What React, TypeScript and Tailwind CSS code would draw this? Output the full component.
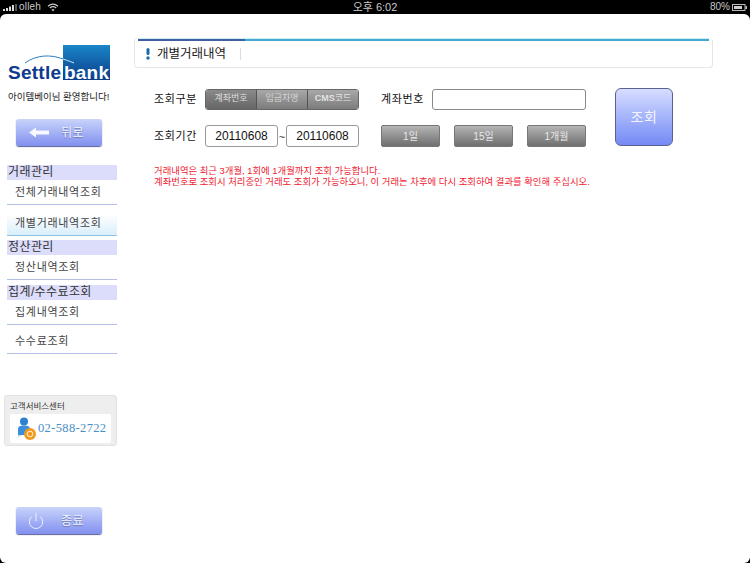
import React from "react";
import { Power } from "lucide-react";

const font = { fontFamily: '"Liberation Sans", "Noto Sans CJK KR", sans-serif' };

function StatusBar() {
  return (
    <div className="flex h-[14px] items-center justify-between bg-black pl-[3px] pr-[3px] text-[10px] leading-[14px] text-[#c9c9c9]">
      <div className="flex w-[200px] items-center">
        <svg width="14" height="7" viewBox="0 0 14 7">
          <rect x="0" y="5" width="2" height="2" fill="#ddd" />
          <rect x="3" y="4" width="2" height="3" fill="#ddd" />
          <rect x="6" y="2.5" width="2" height="4.5" fill="#ddd" />
          <rect x="9" y="1" width="2" height="6" fill="#ddd" />
          <rect x="12" y="0" width="2" height="7" fill="#555" />
        </svg>
        <span className="ml-[2px] tracking-[0.2px]">olleh</span>
        <svg width="12" height="9" viewBox="0 0 12 9" className="ml-[6px]" fill="none" stroke="#ccc" strokeWidth="1.2">
          <path d="M1 3.2 C4 .6 8 .6 11 3.2" />
          <path d="M2.8 5 C4.8 3.4 7.2 3.4 9.2 5" />
          <path d="M6 8.4 L4.4 6.6 C5.4 6 6.6 6 7.6 6.6 Z" fill="#ccc" stroke="none" />
        </svg>
      </div>
      <span className="text-[11px]">오후 6:02</span>
      <div className="flex w-[200px] items-center justify-end">
        <span>80%</span>
        <svg width="15" height="7" viewBox="0 0 15 7" className="ml-[2px]">
          <rect x="0.5" y="0.5" width="12.5" height="6" fill="none" stroke="#bbb" />
          <rect x="2" y="2" width="8" height="3" fill="#ccc" />
          <rect x="13.5" y="2" width="1.5" height="3" fill="#bbb" />
        </svg>
      </div>
    </div>
  );
}

function Logo() {
  return (
    <svg width="102" height="40" viewBox="0 0 102 40" className="ml-[8px] block">
      <defs>
        <linearGradient id="lg" x1="0" y1="0" x2="0" y2="1">
          <stop offset="0" stopColor="#1a86c8" />
          <stop offset="1" stopColor="#0c3c8a" />
        </linearGradient>
      </defs>
      <rect x="55" y="0" width="47" height="35" fill="url(#lg)" />
      <path d="M17 18 C28 10 42 9 55 14" fill="none" stroke="#2c7cc0" strokeWidth="1" />
      <path d="M55 14 C58 15 61 16 66 18" fill="none" stroke="#cfe6f6" strokeWidth="1" />
      <text x="0" y="34" fontFamily="Liberation Sans" fontWeight="700" fontSize="19" fill="#0d3a8c" textLength="53">Settle</text>
      <text x="56" y="34" fontFamily="Liberation Sans" fontWeight="700" fontSize="19" fill="#ffffff" textLength="45">bank</text>
    </svg>
  );
}

function BlueButton({ icon, label }: { icon: React.ReactNode; label: string }) {
  return (
    <div className="ml-[16px] flex h-[27px] w-[86px] items-center rounded-[3px] bg-gradient-to-b from-[#c9d3fb] to-[#8290ef] shadow-[0_1px_1px_#5a6296]">
      <span className="flex w-[45px] justify-center">{icon}</span>
      <span className="text-[12px] tracking-[0.5px] text-[#f1f3ff] [text-shadow:0_1px_1px_#6b74a8]">{label}</span>
    </div>
  );
}

function Header({ children }: { children: React.ReactNode }) {
  return (
    <div className="ml-[7px] h-[15px] w-[110px] bg-[#dcdcfb] pl-px text-[12px] leading-[15px] tracking-[0.4px] text-[#333]">{children}</div>
  );
}

function Item({ children, active, h = 25, top = 1 }: { children: React.ReactNode; active?: boolean; h?: number; top?: number }) {
  return (
    <div
      style={{ height: h, paddingTop: top > 0 ? top : 0, paddingBottom: top < 0 ? -top : 0 }}
      className={
        "ml-[7px] flex w-[110px] items-center border-b pl-[8px] text-[11px] tracking-[0.7px] text-[#444] " +
        (active ? "border-[#8fc0e4] bg-gradient-to-b from-white to-[#d9eefb]" : "border-[#b4bfe4]")
      }
    >
      {children}
    </div>
  );
}

function Sidebar() {
  return (
    <aside className="w-[134px] shrink-0 pt-[31px]">
      <Logo />
      <div className="ml-[8px] mt-[6px] text-[9.5px] leading-[12px] text-[#222]">아이템베이님 환영합니다!</div>
      <div className="mt-[16px]">
        <BlueButton
          label="뒤로"
          icon={
            <svg width="20" height="11" viewBox="0 0 20 11">
              <path d="M0 5.5 L7 0.5 V3.5 H20 V7.5 H7 V10.5 Z" fill="#f8f8ff" />
            </svg>
          }
        />
      </div>
      <div className="mt-[19px]">
        <Header>거래관리</Header>
        <Item>전체거래내역조회</Item>
        <div className="mt-[9px]">
          <Item active h={22} top={-2}>개별거래내역조회</Item>
        </div>
        <div className="mt-[4px]">
          <Header>정산관리</Header>
        </div>
        <Item>정산내역조회</Item>
        <div className="mt-[5px]">
          <Header>집계/수수료조회</Header>
        </div>
        <Item>집계내역조회</Item>
        <Item h={29} top={5}>수수료조회</Item>
      </div>
      <div className="ml-[4px] mt-[41px] h-[51px] w-[113px] rounded-[3px] border border-[#e2e2e2] bg-[#eeeeee] px-[5px] pt-[5px]">
        <div className="text-[8.5px] leading-[11px] text-[#333]">고객서비스센터</div>
        <div className="mt-[2px] flex h-[29px] items-center rounded-[2px] bg-white pl-[6px]">
          <svg width="21" height="24" viewBox="0 0 21 24">
            <path d="M1 21 L8 17 L4 15 Z" fill="#cfd8e2" />
            <circle cx="8" cy="4.5" r="4" fill="#2f80d0" />
            <path d="M2 18 V12 C2 9 5 8.5 8 8.5 C11 8.5 14 9 14 12 V18 Z" fill="#3a8fdc" />
            <circle cx="14" cy="17" r="6" fill="#f09a20" />
            <circle cx="14" cy="17" r="2.8" fill="none" stroke="#fff3d8" strokeWidth="1" />
          </svg>
          <span className="ml-[1px] text-[12.5px] tracking-[0.35px] text-[#4a8ec8]" style={{ fontFamily: '"Liberation Serif", serif' }}>
            02-588-2722
          </span>
        </div>
      </div>
      <div className="mt-[61px]">
        <BlueButton label="종료" icon={<Power size={18} strokeWidth={1.2} color="#f4f5ff" className="-ml-[6px]" />} />
      </div>
    </aside>
  );
}

function GrayButton({ label }: { label: string }) {
  return (
    <div className="flex h-[22px] w-[59px] items-center justify-center rounded-[2px] border border-[#777] bg-gradient-to-b from-[#b5b5b5] to-[#6f6f6f] text-[10px] text-[#e8e8e8]">
      {label}
    </div>
  );
}

function DateBox({ v }: { v: string }) {
  return (
    <div className="flex h-[22px] w-[73px] items-center justify-center rounded-[3px] border border-[#999] bg-white text-[12px] text-[#111]">
      {v}
    </div>
  );
}

function Seg({ label, dark }: { label: string; dark?: boolean }) {
  return (
    <div
      className={
        "flex flex-1 items-center justify-center border-r border-[#555] text-[9px] " +
        (dark ? "bg-gradient-to-b from-[#8a8a8a] to-[#666] text-[#ddd]" : "bg-gradient-to-b from-[#a8a8a8] to-[#7c7c7c] text-[#d4d4d4]")
      }
    >
      {label}
    </div>
  );
}

function Main() {
  return (
    <main className="flex-1 pl-0 pr-[37px] pt-[24px]">
      <div className="h-[30px] rounded-[4px] border border-t-0 border-[#e6e6e6] bg-white">
        <div className="mx-[3px] flex h-[3px] flex-col">
          <div className="h-px bg-[#c9eef7]" />
          <div className="flex h-[2px]">
            <div className="w-[107px] bg-[#3f5f9f]" />
            <div className="flex-1 bg-[#45a9cf]" />
          </div>
        </div>
        <div className="flex h-[26px] items-center pl-[11px]">
          <svg width="4" height="12" viewBox="0 0 4 12">
            <rect x="0.5" y="0" width="3" height="7" rx="1.5" fill="#1c6aa8" />
            <circle cx="2" cy="10" r="1.7" fill="#1c6aa8" />
          </svg>
          <span className="ml-[7px] w-[83px] text-[12.5px] text-[#222]">개별거래내역</span>
          <span className="h-[12px] w-px bg-[#ddd]" />
        </div>
      </div>
      <div className="ml-[20px] mt-[20px] flex">
        <div className="w-[432px]">
          <div className="flex h-[22px] items-center">
            <span className="w-[51px] text-[11px] tracking-[0.6px] text-[#111]">조회구분</span>
            <div className="flex h-[21px] w-[154px] overflow-hidden rounded-[3px] border border-[#666]">
              <Seg label="계좌번호" dark />
              <Seg label="입금자명" />
              <div className="flex flex-1 items-center justify-center bg-gradient-to-b from-[#a8a8a8] to-[#7c7c7c] text-[9px] text-[#e2e2e2]">
                <span className="font-bold">CMS</span>코드
              </div>
            </div>
            <span className="ml-[22px] w-[51px] text-[11px] tracking-[0.6px] text-[#111]">계좌번호</span>
            <div className="h-[21px] w-[154px] rounded-[3px] border border-[#8a8a8a] bg-white" />
          </div>
          <div className="mt-[15px] flex h-[22px] items-center">
            <span className="w-[51px] text-[11px] tracking-[0.6px] text-[#111]">조회기간</span>
            <DateBox v="20110608" />
            <span className="w-[8px] pt-[2px] text-center text-[11px] text-[#333]">~</span>
            <DateBox v="20110608" />
            <div className="ml-[22px] flex w-[205px] justify-between">
              <GrayButton label="1일" />
              <GrayButton label="15일" />
              <GrayButton label="1개월" />
            </div>
          </div>
        </div>
        <div className="ml-[29px] flex h-[58px] w-[58px] items-center justify-center rounded-[6px] border border-[#5a6390] bg-gradient-to-b from-[#d8ddff] to-[#7589f4] text-[14px] tracking-[0.5px] text-[#f4f5ff]">
          조회
        </div>
      </div>
      <div className="ml-[20px] mt-[18px] text-[9.4px] leading-[11px] text-[#f02030]">
        <div>거래내역은 최근 3개월, 1회에 1개월까지 조회 가능합니다.</div>
        <div>계좌번호로 조회시 처리중인 거래도 조회가 가능하오니, 이 거래는 차후에 다시 조회하여 결과를 확인해 주십시오.</div>
      </div>
    </main>
  );
}

export default function App() {
  return (
    <div className="h-[563px] w-[750px] overflow-hidden bg-black" style={font}>
      <StatusBar />
      <div className="flex h-[549px] rounded-[6px] bg-white">
        <Sidebar />
        <Main />
      </div>
    </div>
  );
}
